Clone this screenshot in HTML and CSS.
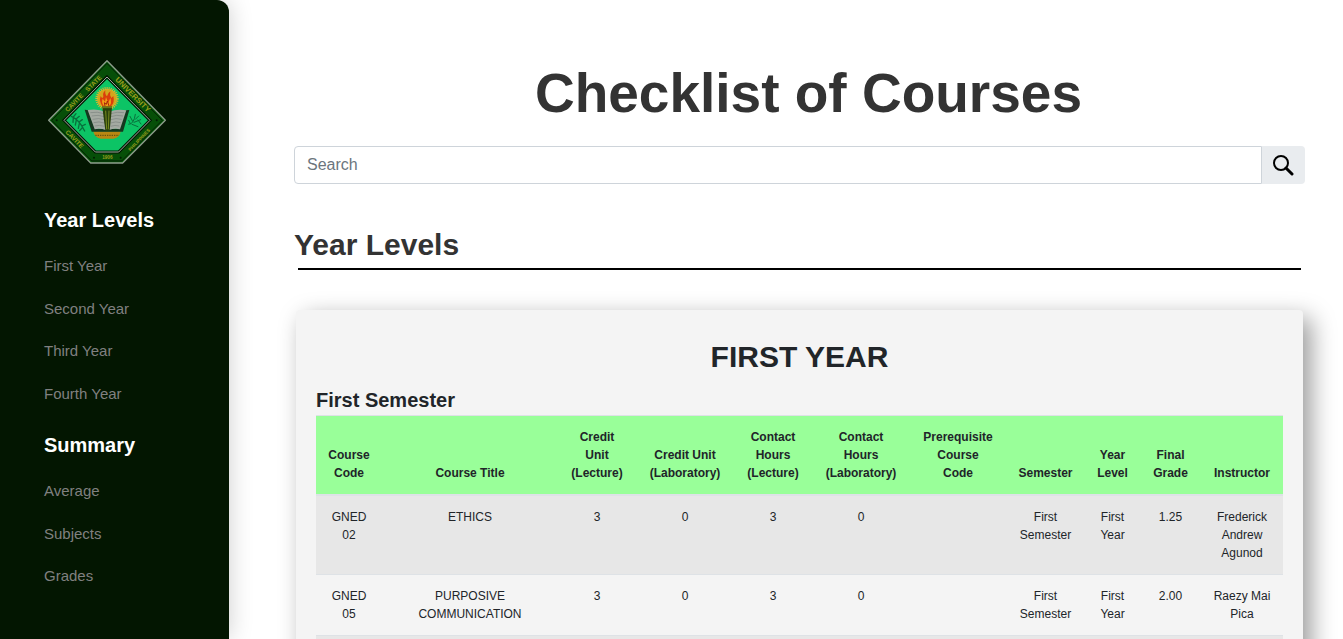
FILE: index.html
```html
<!DOCTYPE html>
<html lang="en">
<head>
<meta charset="utf-8">
<title>Checklist of Courses</title>
<link rel="stylesheet" href="styles.css">
</head>
<body>
<div class="app">
  <aside class="sidebar">
    <svg class="seal" viewBox="21 26 360 318" role="img" aria-label="Cavite State University seal">
      <path d="M201 31 L376 210 L248 338 H152 L26 210 Z" fill="#08590a" stroke="#8f9c8d" stroke-width="4" stroke-linejoin="round"/>
      <path d="M201 39 L367 210 L245 332 H155 L35 210 Z" fill="#064f08" stroke="#021c02" stroke-width="3"/>
      <path d="M201 80 L330 210 L236 305 H166 L72 210 Z" fill="#0cc465" stroke="#021602" stroke-width="9"/>
      <path d="M201 80 L330 210 L236 305 H166 L72 210 Z" fill="none" stroke="#9dac9c" stroke-width="3"/>
      <g class="seal-text" text-anchor="middle">
        <text transform="translate(107 161) rotate(-46)">CAVITE</text>
        <text transform="translate(165 104) rotate(-44)">STATE</text>
        <text class="seal-wide" transform="translate(273 138) rotate(45)">UNIVERSITY</text>
        <text transform="translate(99 271) rotate(46)">CAVITE</text>
        <text class="seal-small" transform="translate(301 272) rotate(-46)">PHILIPPINES</text>
        <text class="seal-small" x="202" y="327">1906</text>
      </g>
      <g fill="#021c02"><circle cx="50" cy="210" r="3"/><circle cx="350" cy="210" r="3"/><circle cx="162" cy="322" r="3"/><circle cx="242" cy="322" r="3"/></g>
      <g fill="none" stroke="#08703c" stroke-width="4" stroke-linecap="round">
        <path d="M94 198 Q118 208 134 242 M100 200 l8 -10 M108 206 l10 -8 M117 215 l10 -7 M126 227 l10 -5 M100 202 l-1 14 M109 209 l-3 15 M118 219 l-3 15 M127 232 l-8 9"/>
        <path stroke-width="3" d="M266 222 Q282 222 286 192 M286 207 l10 -10 M282 216 l20 -8 M276 222 l18 7 M278 213 l-8 -15 M271 220 l-5 -10 M294 209 l9 12"/>
      </g>
      <circle cx="201" cy="145" r="30" fill="#d4a51b"/>
      <circle cx="201" cy="145" r="31" fill="none" stroke="#d9b632" stroke-width="8" stroke-dasharray="3 3"/>
      <path d="M160 243 H242 Q240 263 221 265 H182 Q163 263 160 243 Z" fill="#b98712"/>
      <path d="M166 255 H237" stroke="#5d4a0b" stroke-width="3" stroke-dasharray="4 3"/>
      <path d="M134 178 L148 180 L167 235 H236 L256 180 L268 179 L249 244 H155 Z" fill="#14391f"/>
      <path d="M143 179 Q174 174 199 185 V240 Q180 233 164 237 Z M206 185 Q232 174 259 180 L240 237 Q223 233 206 240 Z" fill="#a4aaa2"/>
      <path d="M151 187 Q172 183 192 190 M155 197 Q174 192 193 199 M158 207 Q176 202 193 208 M161 217 Q177 212 193 218 M164 227 Q178 223 193 228 M212 190 Q231 183 252 187 M212 199 Q230 192 249 197 M212 208 Q228 202 245 207 M212 218 Q227 212 242 217 M212 228 Q225 223 238 227" fill="none" stroke="#7b847e" stroke-width="2"/>
      <path d="M187 171 H216 L209 241 H196 Z" fill="#28400b"/>
      <path d="M197 181 L200 237 M207 181 L205 237" stroke="#77891d" stroke-width="3"/>
      <path d="M186 170 H216" stroke="#657918" stroke-width="7"/>
      <path d="M188 168 Q176 153 182 137 Q188 149 190 138 Q187 128 196 120 Q194 132 201 138 Q203 128 211 123 Q208 134 214 143 L220 137 Q225 157 213 168 Z" fill="#da3f0c"/>
      <path d="M192 167 Q183 157 188 145 L195 154 L198 140 Q203 154 205 157 L211 143 Q216 158 208 167 Z" fill="#f0a017"/>
      <path d="M195 167 L193 157 L199 162 L202 152 L207 167" fill="none" stroke="#a52508" stroke-width="3"/>
    </svg>
    <nav>
      <h2 class="nav-title">Year Levels</h2>
      <ul class="nav-list">
        <li><a href="#first-year">First Year</a></li>
        <li><a href="#second-year">Second Year</a></li>
        <li><a href="#third-year">Third Year</a></li>
        <li><a href="#fourth-year">Fourth Year</a></li>
      </ul>
      <h2 class="nav-title">Summary</h2>
      <ul class="nav-list">
        <li><a href="#average">Average</a></li>
        <li><a href="#subjects">Subjects</a></li>
        <li><a href="#grades">Grades</a></li>
      </ul>
    </nav>
  </aside>
  <main class="content">
    <h1 class="page-title">Checklist of Courses</h1>
    <form class="search" role="search">
      <input class="search-input" type="search" placeholder="Search" aria-label="Search">
      <button class="search-button" type="button" aria-label="Search">
        <svg viewBox="0 0 22 22" width="22" height="22" aria-hidden="true"><circle cx="8" cy="9" r="7" fill="none" stroke="#000" stroke-width="2"/><path d="M13 14 L19 20" stroke="#000" stroke-width="3" stroke-linecap="round"/></svg>
      </button>
    </form>
    <h2 class="section-title">Year Levels</h2>
    <hr class="rule">
    <section class="card" id="first-year">
      <h2 class="card-title">FIRST YEAR</h2>
      <h3 class="semester-title">First Semester</h3>
      <table class="courses">
        <colgroup>
          <col class="w-code"><col class="w-title"><col class="w-lecture"><col class="w-lab"><col class="w-lecture"><col class="w-lab"><col class="w-prereq"><col class="w-semester"><col class="w-year"><col class="w-grade"><col class="w-instructor">
        </colgroup>
        <thead>
          <tr><th scope="col">Course Code</th><th scope="col">Course Title</th><th scope="col">Credit Unit (Lecture)</th><th scope="col">Credit Unit (Laboratory)</th><th scope="col">Contact Hours (Lecture)</th><th scope="col">Contact Hours (Laboratory)</th><th scope="col">Prerequisite Course Code</th><th scope="col">Semester</th><th scope="col">Year Level</th><th scope="col">Final Grade</th><th scope="col">Instructor</th></tr>
        </thead>
        <tbody>
          <tr><td>GNED 02</td><td>ETHICS</td><td>3</td><td>0</td><td>3</td><td>0</td><td></td><td>First Semester</td><td>First Year</td><td>1.25</td><td>Frederick Andrew Agunod</td></tr>
          <tr><td>GNED 05</td><td>PURPOSIVE COMMUNICATION</td><td>3</td><td>0</td><td>3</td><td>0</td><td></td><td>First Semester</td><td>First Year</td><td>2.00</td><td>Raezy Mai Pica</td></tr>
          <tr><td></td><td></td><td></td><td></td><td></td><td></td><td></td><td></td><td></td><td></td><td></td></tr>
        </tbody>
      </table>
    </section>
  </main>
</div>
</body>
</html>
```
FILE: styles.css
```css
* { box-sizing: border-box; }

body {
  margin: 0;
  font-family: "Liberation Sans", Arial, sans-serif;
  font-size: 16px;
  line-height: 1.5;
  color: #212529;
  background: #fff;
}

h1, h2, h3, ul { margin: 0; padding: 0; }

.app {
  display: flex;
  height: 100vh;
  overflow: hidden;
}

.sidebar {
  flex: 0 0 229px;
  padding: 59px 44px 0;
  background: #031601;
  border-top-right-radius: 12px;
  box-shadow: 0 0 24px rgba(0, 0, 0, 0.2);
}

.seal {
  display: block;
  width: 120px;
  height: 106px;
  margin: 0 0 40px 3px;
}

.seal-text {
  font-size: 19px;
  font-weight: bold;
  fill: #9c9e1c;
}

.seal-wide { font-size: 23px; }
.seal-small { font-size: 14px; }

.nav-title {
  margin-bottom: 20px;
  font-size: 20px;
  color: #fff;
}

.nav-list {
  display: flex;
  flex-direction: column;
  gap: 20px;
  margin-bottom: 25px;
  list-style: none;
  font-size: 15px;
}

.nav-list li { display: flex; }

.nav-list a {
  color: #808080;
  text-decoration: none;
}

.content {
  flex: 1;
  min-width: 0;
  padding: 60px 38px 0 65px;
}

.page-title {
  padding-left: 18px;
  margin-bottom: 20px;
  font-size: 55px;
  line-height: 66px;
  text-align: center;
  color: #333;
}

.search {
  display: flex;
  height: 38px;
  margin-bottom: 42px;
}

.search-input {
  flex: 1;
  min-width: 0;
  padding: 0 12px;
  border: 1px solid #ced4da;
  border-radius: 4px 0 0 4px;
  font: inherit;
  color: #495057;
  background: #fff;
  appearance: none;
}

.search-input::placeholder {
  color: #6c757d;
  opacity: 1;
}

.search-button {
  display: flex;
  align-items: center;
  justify-content: center;
  width: 43px;
  padding: 0;
  border: 0;
  border-radius: 0 4px 4px 0;
  background: #e9ecef;
}

.section-title {
  font-size: 30px;
  line-height: 38px;
  color: #333;
}

.rule {
  height: 2px;
  margin: 4px 4px 40px;
  border: 0;
  background: #000;
}

.card {
  margin: 0 2px;
  padding: 28px 20px 20px;
  border-radius: 4px;
  background: #f4f4f4;
  box-shadow: 8px 8px 24px rgba(0, 0, 0, 0.4);
}

.card-title {
  margin-bottom: 12px;
  font-size: 30px;
  line-height: 38px;
  text-align: center;
}

.semester-title {
  margin-bottom: 3px;
  font-size: 20px;
  line-height: 24px;
}

.courses {
  width: 100%;
  table-layout: fixed;
  border-collapse: collapse;
  font-size: 12px;
  text-align: center;
}

.courses th,
.courses td {
  padding: 12px;
  border-top: 1px solid #dee2e6;
  vertical-align: top;
}

.courses th {
  vertical-align: bottom;
  border-bottom: 2px solid #dee2e6;
  background: #9f9;
}

.courses tbody tr:nth-child(odd) { background: #e7e7e7; }

.w-code { width: 66px; }
.w-title { width: 176px; }
.w-lecture { width: 78px; }
.w-lab { width: 98px; }
.w-prereq { width: 96px; }
.w-semester { width: 79px; }
.w-year { width: 55px; }
.w-grade { width: 61px; }
.w-instructor { width: 82px; }
```
